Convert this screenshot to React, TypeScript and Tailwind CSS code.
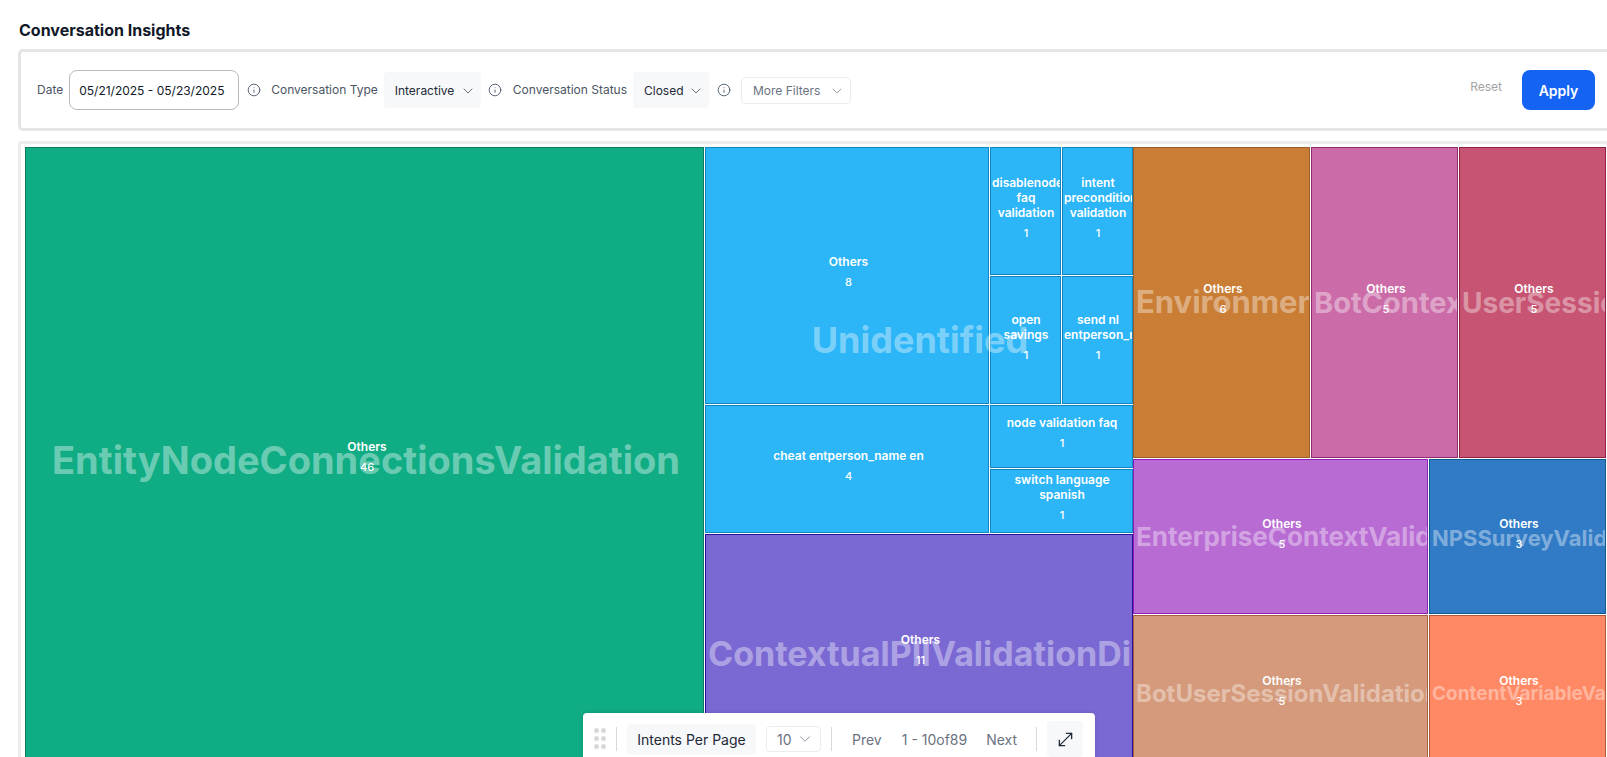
import { ChevronDown, Info, MoveDiagonal } from "lucide-react";

type CellProps = {
  lines?: string[];
  count?: number;
  title?: string;
  titleClass?: string;
  labelClass?: string;
  className: string;
};

// one treemap tile: background, optional big faded group name, label and count
const Cell = ({ lines = ["Others"], count, title, titleClass, labelClass = "pb-[7px] pl-[3px]", className }: CellProps) => (
  <div className={`relative flex-none overflow-hidden border ${className}`}>
    {title && (
      <div className="absolute inset-0 flex items-center">
        <div className={`w-full overflow-hidden whitespace-nowrap px-[2px] text-center font-bold text-white/40 ${titleClass}`}>
          {title}
        </div>
      </div>
    )}
    <div className={`relative flex h-full flex-col items-center justify-center text-white ${labelClass}`}>
      {lines.map((line) => (
        <div key={line} className="w-full overflow-hidden whitespace-nowrap text-center text-[12px] leading-[15px] font-semibold">
          {line}
        </div>
      ))}
      <div className="mt-[6px] text-[11px] leading-[15px] font-medium">{count}</div>
    </div>
  </div>
);

const Divider = () => <div className="h-[24px] w-px flex-none bg-[#d9d9d9]" />;

const App = () => {
  return (
    <div className="h-[757px] w-[1607px] overflow-hidden bg-white font-['Inter',sans-serif] text-[#111827]">
      <div className="relative">
        <h1 className="px-[19px] pt-[21px] text-[16px] leading-[18px] font-bold">Conversation Insights</h1>

        {/* Filters */}
        <div className="mt-[10px] ml-[18px] flex h-[82px] w-[1620px] items-center rounded-[5px] border-[3px] border-[#e5e5e5] pr-[40px] pl-[16px]">
          <span className="text-[12px] text-[#4b5563]">Date</span>
          <div className="ml-[6px] flex h-[40px] w-[170px] items-center rounded-[8px] border border-[#b8b8c0] pt-[2px] pl-[9px] text-[12px] text-[#111827]">
            05/21/2025 - 05/23/2025
          </div>
          <Info size={14} strokeWidth={1.5} className="ml-[8px] flex-none text-[#475569]" />
          <span className="ml-[10px] text-[12px] text-[#4b5563]">Conversation Type</span>
          <div className="ml-[6px] flex h-[36px] w-[97px] items-center justify-between rounded-[4px] bg-[#f7f8fa] pt-[2px] pr-[5px] pl-[11px] text-[12px] text-[#1f2937]">
            Interactive
            <ChevronDown size={16} strokeWidth={1.25} className="text-[#4b5563]" />
          </div>
          <Info size={14} strokeWidth={1.5} className="ml-[7px] flex-none text-[#475569]" />
          <span className="ml-[11px] text-[12px] text-[#4b5563]">Conversation Status</span>
          <div className="ml-[6px] flex h-[36px] w-[76px] items-center justify-between rounded-[4px] bg-[#f7f8fa] pt-[2px] pr-[5px] pl-[11px] text-[12px] text-[#1f2937]">
            Closed
            <ChevronDown size={16} strokeWidth={1.25} className="text-[#4b5563]" />
          </div>
          <Info size={14} strokeWidth={1.5} className="ml-[8px] flex-none text-[#475569]" />
          <div className="ml-[10px] flex h-[27px] w-[110px] items-center justify-between rounded-[4px] border border-[#ececec] pt-[2px] pr-[5px] pl-[11px] text-[12px] text-[#6b7280]">
            More Filters
            <ChevronDown size={16} strokeWidth={1} className="text-[#6b7280]" />
          </div>
          <span className="mb-[6px] ml-auto text-[12px] text-[#a3a3a3]">Reset</span>
          <button className="ml-[20px] flex h-[40px] w-[73px] items-center justify-center rounded-[8px] bg-[#1463f3] text-[14px] font-semibold text-white">
            Apply
          </button>
        </div>

        {/* Treemap */}
        <div className="mt-[10px] ml-[18px] w-[1620px] rounded-[3px] border-[3px] border-b-0 border-[#ededed] pt-[3px] pl-[4px]">
          <div className="flex h-[626px] w-[1581px]">
            <Cell
              count={46}
              title="EntityNodeConnectionsValidation"
              titleClass="ml-[3px] text-[38px]"
              labelClass="pb-[7px] pl-[5px]"
              className="h-full w-[679px] border-[#0b7a5e] bg-[#10ac84]"
            />

            <div className="ml-px flex w-[428px] flex-none flex-col">
              <div className="relative h-[386px] flex-none">
                <div className="flex h-[257px]">
                  <Cell count={8} className="h-full w-[284px] border-[#0f86c0] bg-[#2cb5f7]" />
                  <div className="ml-px grid w-[143px] grid-cols-2 grid-rows-2 gap-px">
                    <Cell lines={["disablenode", "faq", "validation"]} count={1} labelClass="pb-[7px] pl-[1px]" className="border-[#0f86c0] bg-[#2cb5f7]" />
                    <Cell lines={["intent", "precondition", "validation"]} count={1} labelClass="pb-[7px] pl-[1px]" className="border-[#0f86c0] bg-[#2cb5f7]" />
                    <Cell lines={["open", "savings"]} count={1} labelClass="pb-[5px] pl-[1px]" className="border-[#0f86c0] bg-[#2cb5f7]" />
                    <Cell lines={["send nl", "entperson_name"]} count={1} labelClass="pb-[5px] pl-[1px]" className="border-[#0f86c0] bg-[#2cb5f7]" />
                  </div>
                </div>
                <div className="mt-px flex h-[128px]">
                  <Cell lines={["cheat entperson_name en"]} count={4} className="h-full w-[284px] border-[#0f86c0] bg-[#2cb5f7]" />
                  <div className="ml-px flex w-[143px] flex-col gap-px">
                    <Cell lines={["node validation faq"]} count={1} labelClass="pb-[7px] pl-[1px]" className="h-[63px] border-[#0f86c0] bg-[#2cb5f7]" />
                    <Cell lines={["switch language", "spanish"]} count={1} labelClass="pb-[7px] pl-[1px]" className="h-[64px] border-[#0f86c0] bg-[#2cb5f7]" />
                  </div>
                </div>
                <div className="pointer-events-none absolute inset-0 flex items-center justify-center pl-[2px] text-[36px] font-bold text-white/40">
                  Unidentified
                </div>
              </div>
              <Cell
                count={11}
                title="ContextualPIIValidationDisabled"
                titleClass="text-[34px]"
                className="mt-px h-[239px] border-[#2a0f9f] bg-[#7b69d3]"
              />
            </div>

            <div className="flex flex-1 flex-col">
              <div className="flex h-[311px] gap-px">
                <Cell count={6} title="EnvironmentValidation" titleClass="text-[31px]" className="h-full w-[177px] border-[#9a5f28] bg-[#c97d35]" />
                <Cell count={5} title="BotContextValidation" titleClass="text-[29px]" className="h-full w-[147px] border-[#8f2a6e] bg-[#cb6ca8]" />
                <Cell count={5} title="UserSessionValidation" titleClass="text-[28px]" className="h-full w-[147px] border-[#8f1f45] bg-[#c65472]" />
              </div>
              <div className="mt-px flex h-[155px] gap-px">
                <Cell count={5} title="EnterpriseContextValidation" titleClass="text-[26px]" labelClass="pb-[5px] pl-[3px]" className="h-full w-[295px] border-[#8d1fb8] bg-[#b86bd3]" />
                <Cell count={3} title="NPSSurveyValidation" titleClass="pt-[3px] text-[22px]" labelClass="pb-[5px] pl-[3px]" className="h-full w-[177px] border-[#0d5c8c] bg-[#317bc6]" />
              </div>
              <div className="mt-px flex h-[158px] gap-px">
                <Cell count={5} title="BotUserSessionValidation" titleClass="text-[24px]" className="h-full w-[295px] border-[#a5603f] bg-[#d49a7b]" />
                <Cell count={3} title="ContentVariableValidation" titleClass="text-[19px]" className="h-full w-[177px] border-[#b05a3a] bg-[#ff8964]" />
              </div>
            </div>
          </div>
        </div>

        {/* Floating pagination bar */}
        <div className="absolute top-[713px] left-[583px] flex h-[60px] w-[512px] items-start rounded-t-[4px] bg-white pt-[8px] text-[14px] shadow-[0_0_4px_rgba(0,0,0,0.15)]">
          <div className="mt-[7px] ml-[11px] grid h-[21px] w-[13px] flex-none grid-cols-2 content-between justify-between">
            {[0, 1, 2, 3, 4, 5].map((dot) => (
              <span key={dot} className="h-[5px] w-[5px] rounded-full bg-[#d9d9d9]" />
            ))}
          </div>
          <div className="mt-[6px] ml-[9px] flex-none"><Divider /></div>
          <div className="mt-[3px] ml-[10px] flex h-[31px] w-[129px] items-center justify-center rounded-[4px] bg-[#f7f8fa] text-[#1f2937]">Intents Per Page</div>
          <div className="mt-[5px] ml-[10px] flex h-[26px] w-[55px] items-center justify-between rounded-[4px] border border-[#ececec] pr-[6px] pl-[10px] text-[#6b7280]">
            10
            <ChevronDown size={18} strokeWidth={1} />
          </div>
          <div className="mt-[6px] ml-[10px] flex-none"><Divider /></div>
          <span className="mt-[8px] ml-[20px] text-[#6b7280]">Prev</span>
          <span className="mt-[8px] ml-[20px] text-[#6b7280]">1 - 10of89</span>
          <span className="mt-[8px] ml-[19px] text-[#6b7280]">Next</span>
          <div className="mt-[6px] ml-[19px] flex-none"><Divider /></div>
          <div className="ml-[10px] flex h-[36px] w-[36px] items-center justify-center rounded-[4px] bg-[#f7f8fa] text-[#1f2937]">
            <MoveDiagonal size={21} strokeWidth={1.5} />
          </div>
        </div>
      </div>
    </div>
  );
};

export default App;
